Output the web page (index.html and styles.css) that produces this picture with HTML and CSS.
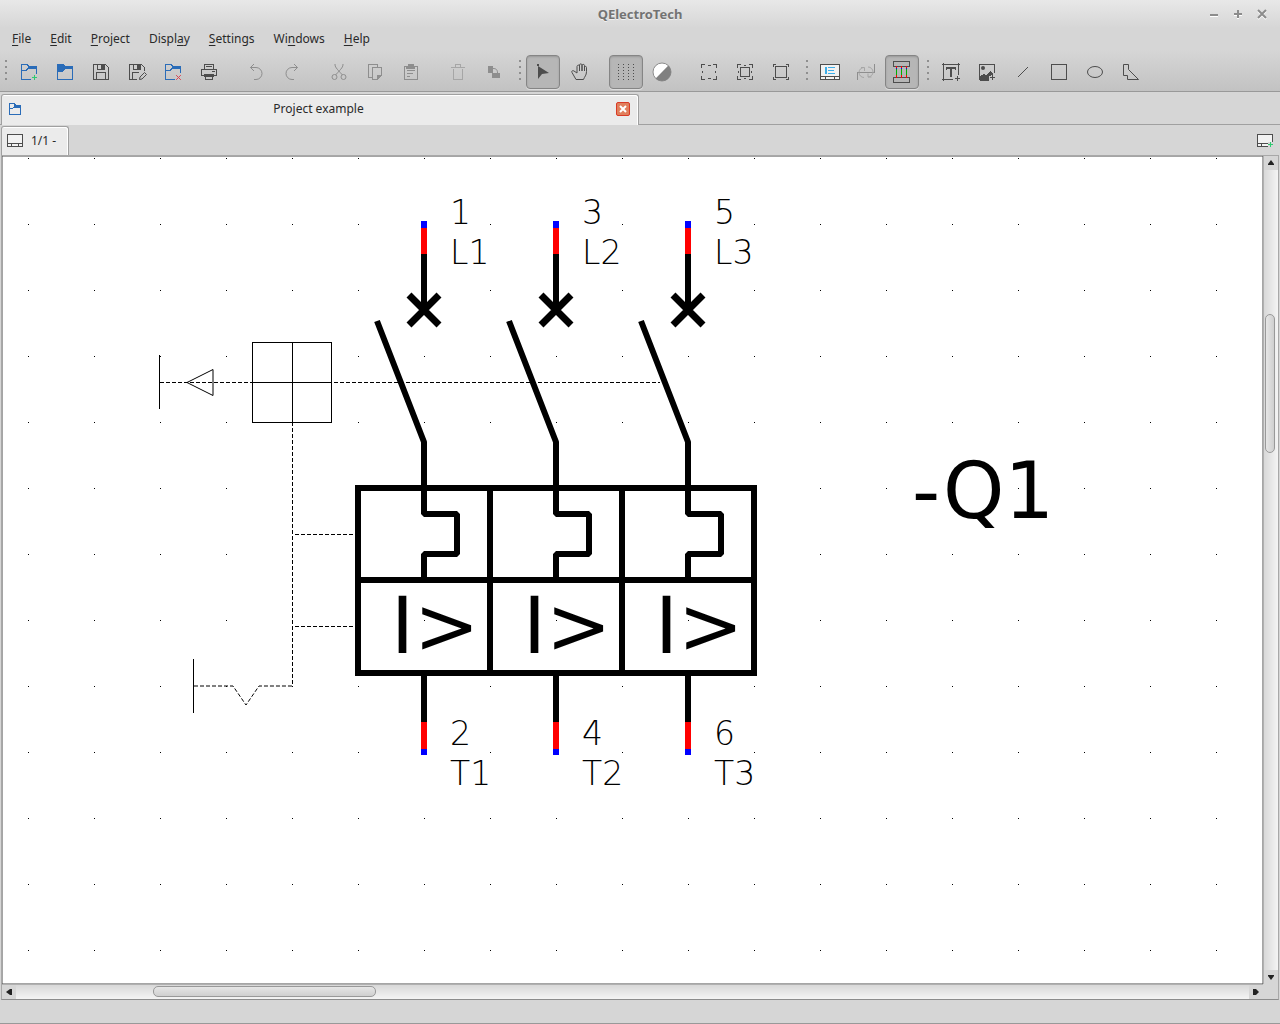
FILE: index.html
```html
<!DOCTYPE html>
<html lang="en">
<head>
  <meta charset="UTF-8" />
  <title>QElectroTech</title>
  <link rel="stylesheet" href="styles.css">
</head>
<body>
  <header class="top">
    <div class="titlebar">
      <h1>QElectroTech</h1>
      <div class="window-buttons">
        <button aria-label="Minimize"><svg width="10" height="10"><path d="M1 6h8" /></svg></button>
        <button aria-label="Maximize"><svg width="10" height="10"><path d="M1 5h8M5 1v8" /></svg></button>
        <button aria-label="Close"><svg width="10" height="10"><path d="M1 1l8 8M9 1l-8 8" /></svg></button>
      </div>
    </div>

    <nav class="menubar">
      <button><u>F</u>ile</button>
      <button><u>E</u>dit</button>
      <button><u>P</u>roject</button>
      <button>Displ<u>a</u>y</button>
      <button><u>S</u>ettings</button>
      <button>Wi<u>n</u>dows</button>
      <button><u>H</u>elp</button>
    </nav>

    <div class="toolbar">
      <span class="handle"></span>
      <button class="tool blue" aria-label="New project">
        <svg class="icon crisp"><path d="M4.5 19.5v-15h6l1 2h8V14M4.5 19.5H14M5 10.5h3l3-2h8" /><path class="fill" d="M12 6h8v3h-9l-2 2v-2z" /><path class="green" d="M17.5 15v5M15 17.5h5" /></svg>
      </button>
      <button class="tool blue" aria-label="Open project">
        <svg class="icon crisp"><path d="M4.5 5v14.5h15v-13" /><path class="fill" d="M4 4h7l1 2h8v3h-8l-3 3H4z" /></svg>
      </button>
      <button class="tool" aria-label="Save">
        <svg class="icon crisp"><path d="M4.5 4.5h12l3 3v12h-15zM7.5 19v-6.5h9V19M8.5 5v4.5h7V5" /><path class="fill" d="M12 5h3v4h-3z" /></svg>
      </button>
      <button class="tool" aria-label="Save as">
        <svg class="icon"><path class="crisp" d="M12 19.5H4.5v-15h12l3 3V11M7.5 19v-6.5H14M8.5 5v4.5h7V5" /><path class="fill" d="M12 5h3v4h-3z" /><path d="M14.5 19.5l.5-2.5 4.5-4.5 2 2L17 19z" /></svg>
      </button>
      <button class="tool blue" aria-label="Close project">
        <svg class="icon crisp"><path d="M4.5 19.5v-15h6l1 2h8V13M4.5 19.5H14M5 10.5h3l3-2h8" /><path class="fill" d="M12 6h8v3h-9l-2 2v-2z" /></svg>
        <svg class="icon over"><path class="red" d="M15.5 15.5l4 4M19.5 15.5l-4 4" /></svg>
      </button>
      <button class="tool" aria-label="Print">
        <svg class="icon crisp"><path d="M7.5 9V4.5h9V9M9 6.5h6M7 15.5H4.5v-6h15v6H17M8.5 19.5v-4h7v4z" /><path class="fill" d="M7 14h10v3H7zM15 11h3v1h-3z" /></svg>
      </button>
      <span class="separator"></span>
      <button class="tool" aria-label="Undo" disabled>
        <svg class="icon"><path d="M6.5 7.5H12a6 6 0 0 1 0 12h-2M10 4L6.5 7.5 10 11" /></svg>
      </button>
      <button class="tool" aria-label="Redo" disabled>
        <svg class="icon"><path d="M17.5 7.5H12a6 6 0 0 0 0 12h2M14 4l3.5 3.5L14 11" /></svg>
      </button>
      <span class="separator"></span>
      <button class="tool" aria-label="Cut" disabled>
        <svg class="icon"><path d="M8 4c0 3 1 4 7.5 11M16 4c0 3-1 4-7.5 11" /><circle cx="7.5" cy="17" r="2.5" /><circle cx="16.5" cy="17" r="2.5" /></svg>
      </button>
      <button class="tool" aria-label="Copy" disabled>
        <svg class="icon crisp"><path d="M9 17.5H5.5v-13h9V7M9.5 7.5h9V15l-4 4.5h-5z" /><path class="fill" d="M14 15h5l-5 5z" /></svg>
      </button>
      <button class="tool" aria-label="Paste" disabled>
        <svg class="icon crisp"><path d="M5.5 6.5h13v13h-13zM8 10.5h8M8 13.5h6M8 16.5h3" /><path class="fill" d="M9 4h6v2h1v3H7V6h2z" /></svg>
      </button>
      <span class="separator"></span>
      <button class="tool faint" aria-label="Delete" disabled>
        <svg class="icon crisp"><path d="M5 7.5h14M7.5 9v10.5h9V9M9.5 6.5v-2h5v2" /></svg>
      </button>
      <button class="tool" aria-label="Rotate" disabled>
        <svg class="icon"><path class="fill" d="M6 6h5v7H6zM10 13h8v5h-8z" /><path d="M11 8.5c3 0 4.5 1 4.5 4.5" /></svg>
      </button>
      <span class="handle"></span>
      <button class="tool" aria-label="Selection mode" aria-pressed="true">
        <svg class="icon"><path class="fill" d="M7 6l11 7-7 1-4 5zM6 4h2v2H6z" /></svg>
      </button>
      <button class="tool" aria-label="Move view">
        <svg class="icon"><path d="M9 19.5h7.5c1-3 3-4 3-8V7.5c0-1.5-2-1.5-2 0V11V5.5c0-1.5-2.5-1.5-2.5 0V11V5c0-1.5-2.5-1.5-2.5 0v6V6c0-1.5-2.5-1-2.5.5L10 13l-3-2c-1.5-1-3 .5-2 1.5z" /></svg>
      </button>
      <span class="separator"></span>
      <button class="tool" aria-label="Show grid" aria-pressed="true">
        <svg class="icon crisp"><path class="dots" d="M4.5 4v16M9.5 4v16M14.5 4v16M19.5 4v16" /></svg>
      </button>
      <button class="tool" aria-label="Background colour">
        <svg class="icon"><circle class="disc" cx="12" cy="12" r="9" /><path class="half" d="M18.4 5.6A9 9 0 0 1 5.6 18.4z" /></svg>
      </button>
      <span class="separator"></span>
      <button class="tool" aria-label="Zoom fit">
        <svg class="icon crisp"><path d="M4.5 8V4.5H8M16 4.5h3.5V8M19.5 16v3.5H16M8 19.5H4.5V16M11 5.5h3M11 18.5h3M5.5 11v2M18.5 11v2" /></svg>
      </button>
      <button class="tool" aria-label="Zoom content">
        <svg class="icon crisp"><path d="M4.5 8V4.5H8M16 4.5h3.5V8M19.5 16v3.5H16M8 19.5H4.5V16M11 5.5h2M11 18.5h2M5.5 11v2M18.5 11v2M7.5 7.5h9v9h-9z" /></svg>
      </button>
      <button class="tool" aria-label="Zoom reset">
        <svg class="icon crisp"><path d="M4.5 7V4.5H7M17 4.5h2.5V7M19.5 17v2.5H17M7 19.5H4.5V17M6.5 6.5h11v11h-11z" /></svg>
      </button>
      <span class="handle"></span>
      <button class="tool" aria-label="Diagram properties">
        <svg class="icon crisp"><path class="paper" d="M2.5 4.5h19v15h-19z" /><path d="M3 16.5h18M7.5 17v2M16.5 17v2" /><path class="sky" d="M8 7v7" /><path class="sky thin" d="M10 7.5h7M10 10.5h6M10 13.5h7" /></svg>
      </button>
      <button class="tool" aria-label="Reset conductors" disabled>
        <svg class="icon"><path class="crisp" d="M3.5 20v-7.5h17V4" /><path class="light" d="M10 17.5a5 5 0 0 1 0-10M14 7a5 5 0 0 1 0 10M7 7.5h3.5V11M17.5 17H14v-3.5" /></svg>
      </button>
      <button class="tool" aria-label="Auto conductor" aria-pressed="true">
        <svg class="icon crisp"><path d="M3.5 1.5h16v5h-16zM3.5 17.5h16v5h-16z" /><path class="wire-blue" d="M6.5 7v10M11.5 7v10M16.5 7v10" /><path class="wire-green" d="M6.5 9v6M11.5 9v6M16.5 9v6" /><path class="wire-red" d="M6.5 6v2M11.5 6v2M16.5 6v2M6.5 15v3M11.5 15v3M16.5 15v3" /></svg>
      </button>
      <span class="handle"></span>
      <button class="tool" aria-label="Add text">
        <svg class="icon crisp"><path d="M3 4.5h18M4.5 3v18M19.5 3v12M3 19.5h11M18.5 16v5M16 18.5h5" /><path class="fill" d="M7 7h10v3h-1V9h-3v8h-2V9H8v1H7z" /></svg>
      </button>
      <button class="tool" aria-label="Add image">
        <svg class="icon crisp"><path d="M4.5 4.5h15V13M4.5 4v15.5H14M17.5 15v5M15 17.5h5" /><path class="fill" d="M5 19v-3l4-2 2 1 4-4 3 2v2l-4 1v5H5z" /></svg>
        <svg class="icon over"><circle class="fill" cx="8" cy="8" r="2" /></svg>
      </button>
      <button class="tool" aria-label="Add line">
        <svg class="icon"><path d="M7 17L17 7" /></svg>
      </button>
      <button class="tool" aria-label="Add rectangle">
        <svg class="icon crisp"><path d="M4.5 4.5h15v15h-15z" /></svg>
      </button>
      <button class="tool" aria-label="Add ellipse">
        <svg class="icon"><ellipse cx="12" cy="12" rx="7.5" ry="5.5" /></svg>
      </button>
      <button class="tool" aria-label="Add polygon">
        <svg class="icon"><path d="M4.5 4.5h5v5l10 10H8.5v-4h-4z" /></svg>
      </button>
    </div>
  </header>

  <div class="project-tabs">
    <div class="project-tab">
      <svg class="folder crisp" width="12" height="12"><path d="M.5 11.5V.5h5l1 2h5v9zM1 5.5h2l2-1" /><path class="fill" d="M5 2h7v3H5z" /></svg>
      <span>Project example</span>
      <button class="tab-close" aria-label="Close tab"><svg width="8" height="8"><path d="M1 1l6 6M7 1L1 7" /></svg></button>
    </div>
  </div>

  <div class="folio-tabs">
    <div class="folio-tab">
      <svg class="crisp" width="16" height="14"><path class="paper" d="M.5.5h15v12H.5z" /><path d="M1 9.5h14M4.5 10v2M11.5 10v2" /></svg>
      <span>1/1 -</span>
    </div>
    <button class="add-folio" aria-label="Add folio"><svg class="crisp" width="17" height="14"><path class="paper" d="M.5.5h15v12H.5z" /><path d="M1 9.5h10M4.5 10v2" /><path class="gap" d="M11 8h6v6h-6z" /><path class="green" d="M13.5 8v5M11 10.5h5" /></svg></button>
  </div>

  <main class="workspace">
    <svg class="canvas">
      <defs>
        <pattern id="grid" x="26" y="2" width="66" height="66" patternUnits="userSpaceOnUse">
          <rect width="1" height="1" />
        </pattern>

        <!-- one pole of the breaker, x = 0 on the conductor -->
        <g id="pole">
          <path class="terminal" d="M0 65v34M0 566v33" />
          <path class="terminal-end" d="M0 65v7M0 593v6" />
          <path class="thick" d="M0 98v56M-47 165L0 286v72h33v40H0v26M0 520v46" />
          <path class="contact" d="M-15 139l30 30M15 139l-30 30" />
        </g>
      </defs>

      <rect width="100%" height="100%" fill="url(#grid)" />

      <!-- mechanical links -->
      <g class="crisp">
        <path class="dashed" d="M158 226.5h500M290.5 266v264M293 378.5h60M293 470.5h60" />
        <path class="solid" d="M157.5 199v54M191.5 503v54M250.5 186.5h79v80h-79zM290.5 187v79M251 226.5h79" />
      </g>
      <path class="solid" d="M185 226.5l26-13v26z" />
      <path class="dashed" d="M192 530h39l13 19 13-19h34" />

      <use href="#pole" x="422" />
      <use href="#pole" x="554" />
      <use href="#pole" x="686" />
      <path class="thick frame" d="M356 332h396v185H356zM356 424h396M488 332v185M620 332v185" />

      <g class="big">
        <text x="389" y="497">I&gt;</text>
        <text x="521" y="497">I&gt;</text>
        <text x="653" y="497">I&gt;</text>
        <text x="910" y="362">-Q1</text>
      </g>

      <g class="label">
        <text x="448" y="68">1</text>
        <text x="448" y="108">L1</text>
        <text x="580" y="68">3</text>
        <text x="580" y="108">L2</text>
        <text x="712" y="68">5</text>
        <text x="712" y="108">L3</text>
        <text x="448" y="589">2</text>
        <text x="448" y="629">T1</text>
        <text x="580" y="589">4</text>
        <text x="580" y="629">T2</text>
        <text x="712" y="589">6</text>
        <text x="712" y="629">T3</text>
      </g>
    </svg>

    <div class="scroll vertical">
      <button aria-label="Scroll up"><svg width="8" height="8"><path d="M4 1l3 4v1H1V5z" /></svg></button>
      <div class="track"><div class="thumb"></div></div>
      <button aria-label="Scroll down"><svg width="8" height="8"><path d="M1 2h6v1L4 7 1 3z" /></svg></button>
    </div>
    <div class="scroll horizontal">
      <button aria-label="Scroll left"><svg width="8" height="8"><path d="M1 4l4-3h2v6H5z" /></svg></button>
      <div class="track"><div class="thumb"></div></div>
      <button aria-label="Scroll right"><svg width="8" height="8"><path d="M7 4L4 1H1v6h3z" /></svg></button>
    </div>
  </main>

  <footer class="statusbar"></footer>
</body>
</html>
```
FILE: styles.css
```css
* {
  box-sizing: border-box;
}

body {
  margin: 0;
  height: 100vh;
  display: flex;
  flex-direction: column;
  background: #d6d6d6;
  color: #2a2a2a;
  font-family: "Noto Sans", sans-serif;
  font-size: 12px;
  line-height: 16px;
}

button {
  display: flex;
  align-items: center;
  justify-content: center;
  margin: 0;
  padding: 0;
  border: none;
  background: none;
  color: inherit;
  font: inherit;
}

svg {
  display: block;
  fill: none;
  stroke: #4d4d4d;
}

.crisp {
  shape-rendering: crispEdges;
}

/* title, menus, tools */

.top {
  border-bottom: 1px solid #999;
}

.titlebar {
  position: relative;
  height: 28px;
  display: flex;
  align-items: center;
  justify-content: center;
  background: linear-gradient(#e8e8e8, #d6d6d6);
}

h1 {
  margin: 0;
  color: #737373;
  font-size: 13px;
  text-shadow: 0 1px 0 #f0f0f0;
}

.window-buttons {
  position: absolute;
  right: 13px;
  top: 9px;
  display: flex;
  gap: 14px;
}

.window-buttons svg {
  stroke: #8c8c8c;
  stroke-width: 2;
  filter: drop-shadow(0 1px 0 #fff);
}

.menubar {
  display: flex;
  height: 22px;
  padding-left: 3px;
}

.menubar button {
  padding: 0 10px 0 9px;
}

.menubar u {
  text-underline-offset: 2px;
}

.toolbar {
  display: flex;
  align-items: center;
  height: 41px;
  padding-top: 3px;
  background: linear-gradient(#d6d6d6, #c2c2c2);
}

.handle {
  width: 13px;
  height: 26px;
  background: repeating-linear-gradient(#8f8f8f 0 2px, transparent 2px 6px) 7px 1px / 2px 24px no-repeat;
}

.handle:first-child {
  width: 11px;
  background-position-x: 5px;
}

.separator {
  width: 11px;
}

.tool {
  position: relative;
  width: 34px;
  height: 34px;
  margin: 0 1px;
  border-radius: 4px;
}

.tool[aria-pressed="true"] {
  border: 1px solid #858585;
  background: #b6b6b6;
  box-shadow: inset 0 1px 2px #999, 0 1px 0 #dcdcdc;
}

.icon {
  width: 24px;
  height: 24px;
}

.over {
  position: absolute;
  left: 5px;
  top: 5px;
}

.fill {
  fill: #4d4d4d;
  stroke: none;
}

.tool:disabled svg {
  stroke: #8e8e8e;
}

.tool:disabled .fill {
  fill: #8e8e8e;
}

.tool.faint:disabled svg,
.tool:disabled .light {
  stroke: #a6a6a6;
}

.blue svg,
.folder {
  stroke: #2a6cb8;
}

.blue .fill,
.folder .fill {
  fill: #2a6cb8;
}

.green {
  stroke: #2ecc71;
}

.red {
  stroke: #da4453;
  stroke-linecap: square;
}

.dots {
  stroke-dasharray: 1 2;
}

.disc {
  fill: #fff;
  stroke: #8c8c8c;
}

.half {
  fill: #808080;
  stroke: none;
}

.paper {
  fill: #f2f2f2;
}

.gap {
  fill: #d6d6d6;
  stroke: none;
}

.sky {
  stroke: #3daee9;
  stroke-width: 2;
}

.sky.thin {
  stroke-width: 1;
}

.wire-blue {
  stroke: #00f;
}

.wire-green {
  stroke: #00b000;
}

.wire-red {
  stroke: #f00;
}

/* tabs */

.project-tabs {
  height: 33px;
  padding: 2px 3px 0 1px;
  border-bottom: 1px solid #a0a0a0;
}

.project-tab {
  display: flex;
  align-items: center;
  justify-content: space-between;
  width: 50%;
  height: 31px;
  padding: 0 8px 2px 7px;
  border: 1px solid #a0a0a0;
  border-bottom: none;
  border-radius: 3px 3px 0 0;
  background: #ebebeb;
  box-shadow: inset -1px 1px 0 #fff;
}

.tab-close {
  width: 14px;
  height: 14px;
  border: 1px solid #d93a25;
  border-radius: 2px;
  background: #e07f5c;
}

.tab-close svg {
  stroke: #fff;
  stroke-width: 2;
}

.folio-tabs {
  display: flex;
  justify-content: space-between;
  height: 30px;
  padding: 1px 6px 0 1px;
}

.folio-tab {
  display: flex;
  align-items: center;
  gap: 8px;
  padding: 0 12px 1px 5px;
  border: 1px solid #a0a0a0;
  border-bottom: none;
  border-radius: 3px 3px 0 0;
  background: #ebebeb;
  box-shadow: inset -1px 1px 0 #fff;
}

/* drawing area */

.workspace {
  flex: 1;
  min-height: 0;
  display: grid;
  grid-template-columns: 1fr 15px;
  grid-template-rows: 1fr 15px;
  margin: 0 1px;
  border: 1px solid #a8a8a8;
  border-bottom-color: #8c8c8c;
}

.canvas {
  width: 100%;
  height: 100%;
  background: #fff;
}

#grid {
  fill: #000;
  stroke: none;
}

.solid,
.dashed,
.thick,
.contact {
  stroke: #000;
}

.dashed {
  stroke-dasharray: 4 2;
}

.thick {
  stroke-width: 6;
  stroke-linejoin: bevel;
}

.thick.frame {
  stroke-linejoin: miter;
}

.contact {
  stroke-width: 7;
}

.terminal {
  stroke: #f00;
  stroke-width: 6;
}

.terminal-end {
  stroke: #00f;
  stroke-width: 6;
}

.canvas text {
  font-family: "DejaVu Sans", sans-serif;
  fill: #000;
  stroke: none;
}

.big {
  font-size: 78px;
}

.label {
  font-size: 33px;
  font-weight: 200;
}

.canvas .label text {
  font-family: "DejaVu Sans Light", "DejaVu Sans", sans-serif;
}

.scroll {
  display: flex;
}

.scroll button {
  flex: 0 0 14px;
}

.scroll button svg {
  fill: #222;
  stroke: none;
}

.track {
  flex: 1;
  display: flex;
}

.track::before,
.track::after {
  content: "";
}

.thumb {
  border: 1px solid #999;
  border-radius: 5px;
}

.vertical {
  flex-direction: column;
  border-left: 1px solid #b0b0b0;
}

.vertical .track {
  flex-direction: column;
  padding: 0 3px 0 1px;
  background: linear-gradient(to right, #d8d8d8, #f4f4f4);
}

.vertical .track::before {
  flex: 145;
}

.vertical .thumb {
  flex: 137;
  background: linear-gradient(to right, #e6e6e6, #cfcfcf);
}

.vertical .track::after {
  flex: 519;
}

.horizontal {
  border-top: 1px solid #b0b0b0;
}

.horizontal .track {
  padding: 1px 0 2px;
  background: linear-gradient(#d8d8d8, #f4f4f4);
}

.horizontal .track::before {
  flex: 137;
}

.horizontal .thumb {
  flex: 222;
  background: linear-gradient(#e6e6e6, #cfcfcf);
}

.horizontal .track::after {
  flex: 875;
}

.statusbar {
  height: 24px;
  border-bottom: 1px solid #999;
}
```
